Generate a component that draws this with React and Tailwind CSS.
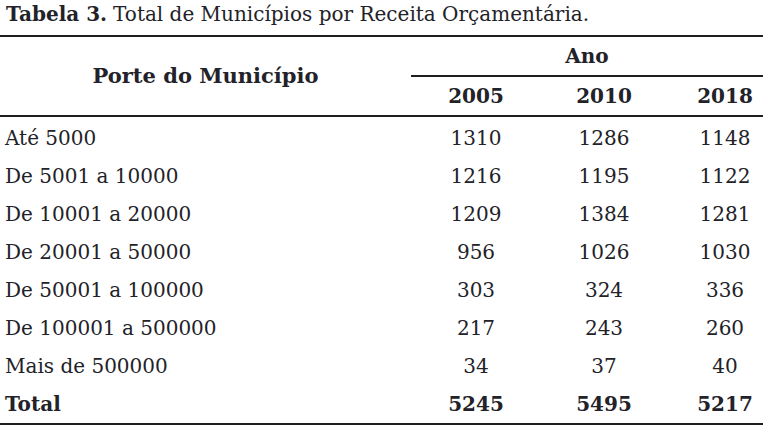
import React from 'react';

const rows = [
  ['Até 5000', '1310', '1286', '1148'],
  ['De 5001 a 10000', '1216', '1195', '1122'],
  ['De 10001 a 20000', '1209', '1384', '1281'],
  ['De 20001 a 50000', '956', '1026', '1030'],
  ['De 50001 a 100000', '303', '324', '336'],
  ['De 100001 a 500000', '217', '243', '260'],
  ['Mais de 500000', '34', '37', '40'],
];

function Row({ cells, bold }) {
  return (
    <div className={`grid grid-cols-[411px_130px_126px_96px] h-[38px] items-center ${bold ? 'font-bold' : ''}`}>
      <div className="pl-[5px]">{cells[0]}</div>
      <div className="text-center">{cells[1]}</div>
      <div className="text-center">{cells[2]}</div>
      <div className="text-center pl-[20px]">{cells[3]}</div>
    </div>
  );
}

export default function App() {
  return (
    <div className="w-[763px] h-[434px] bg-white text-[#222228] [font-family:'DejaVu_Serif',serif] text-[20px] overflow-hidden">
      <p className="h-[28px] mb-[7px] pl-[6px] flex items-center">
        <span className="font-bold mr-[6px]">Tabela 3.</span>
        Total de Municípios por Receita Orçamentária.
      </p>

      <div className="border-y-2 border-[#1e1e1e]">
        {/* header */}
        <div className="grid grid-cols-[411px_130px_126px_96px] border-b-2 border-[#1e1e1e] font-bold mb-[2px]">
          <div className="row-span-2 flex items-center justify-center text-[21px]">Porte do Município</div>
          <div className="col-span-3 h-[40px] flex items-center justify-center border-b-2 border-[#1e1e1e]">Ano</div>
          <div className="h-[38px] flex items-center justify-center">2005</div>
          <div className="h-[38px] flex items-center justify-center">2010</div>
          <div className="h-[38px] flex items-center justify-center pl-[20px]">2018</div>
        </div>

        {rows.map((r) => (
          <Row key={r[0]} cells={r} />
        ))}
        <Row cells={['Total', '5245', '5495', '5217']} bold />
      </div>
    </div>
  );
}
